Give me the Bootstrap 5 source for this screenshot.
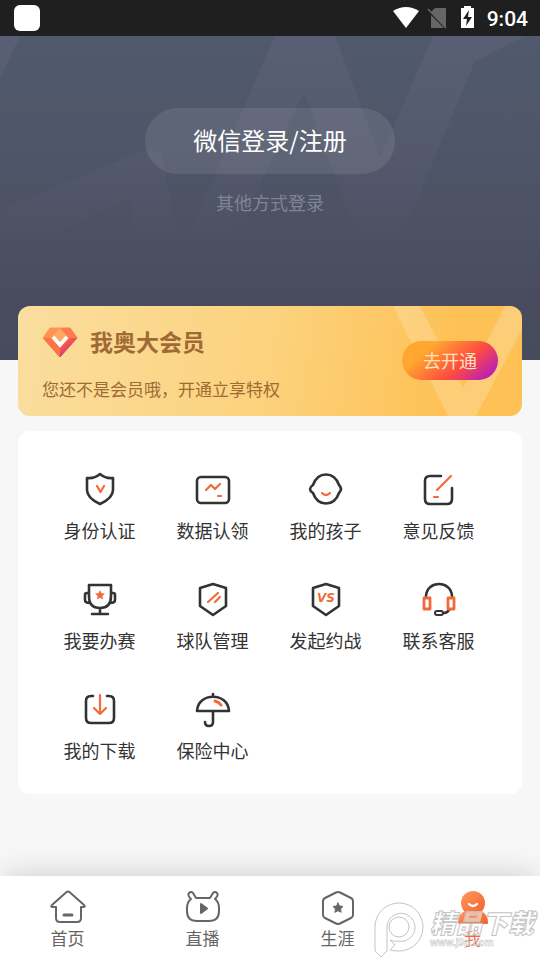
<!DOCTYPE html>
<html lang="zh-CN">
<head>
<meta charset="utf-8">
<meta name="viewport" content="width=device-width, initial-scale=1">
<title>我的</title>
<link href="https://cdn.jsdelivr.net/npm/bootstrap@5.3.0/dist/css/bootstrap.min.css" rel="stylesheet">
<style>
body{font-family:"Noto Sans CJK SC","Liberation Sans",sans-serif;background:#f7f7f7;color:#333}
svg{display:block}
.status{height:36px;background:#1f1f1f;color:#fff;padding:0 12px 0 14px}
.app-dot{width:26px;height:26px;border-radius:6px;background:#fff}
.clock{font:500 21px/24px Roboto,sans-serif;padding-top:2px}
.hero{height:324px;padding-top:72px;background:linear-gradient(#505a6c,#4f5568 38%,#484c5e 80%,#474c5c)}
.hero-art{position:absolute;inset:0;width:100%;height:324px}
.btn-wechat{--bs-btn-color:#fff;--bs-btn-bg:rgba(255,255,255,.09);--bs-btn-hover-color:#fff;--bs-btn-hover-bg:rgba(255,255,255,.15);--bs-btn-border-width:0;height:66px;padding:0 48px 2px;font-size:24px;line-height:36px}
.other{font-size:18px;line-height:24px;color:#818592;margin-top:16px}
.wrap{padding:0 18px}
.vip{margin-top:-54px;height:110px;border-radius:12px;background:linear-gradient(100deg,#fade9f,#fcd27d 50%,#fec155 85%);color:#a06a35;padding:19px 24px 0}
.vip-art{position:absolute;right:0;top:0}
.vip-title{font-size:23px;line-height:32px;font-weight:700}
.vip-note{font-size:17px;line-height:24px;margin-top:20px}
.btn-open{--bs-btn-color:#ffe3bd;--bs-btn-hover-color:#fff;--bs-btn-border-width:0;width:96px;height:39px;margin-top:16px;padding:0 0 2px;font-size:18px;line-height:36px;background:linear-gradient(140deg,#ffa72e 25%,#ff4b41 62%,#b81db8 92%)}
.panel{margin-top:15px;border-radius:12px;background:#fff;padding:38px 27px 32px 25px}
.tiles{row-gap:37px}
.tile{color:#333;font-size:18px;line-height:24px;height:73px}
.tile svg,.tab svg{fill:none;stroke:#333;stroke-width:2.6;stroke-linecap:round;stroke-linejoin:round}
.tile svg .o{stroke:#f26a3a;stroke-width:2.2}
.tile svg .of,.tile svg .vs{fill:#f26a3a;stroke:none}
.vs{font:italic 700 12px "DejaVu Sans",sans-serif}
.tabs{height:84px;background:#fff;box-shadow:0 -4px 30px -4px rgba(0,0,0,.18);padding-top:11px}
.tab{color:#666;font-size:17px;line-height:22px}
.tab svg{stroke:#666;stroke-width:2}
.tab.on{color:#f0694a}
.wm{position:absolute;right:0;bottom:0;pointer-events:none}
.wm text{fill:rgba(255,255,255,.5);stroke:#c4c4c4}
</style>
</head>
<body class="d-flex flex-column min-vh-100">
<div class="status d-flex align-items-center justify-content-between flex-shrink-0">
  <span class="app-dot"></span>
  <div class="d-flex align-items-center">
    <svg width="97" height="28" viewBox="0 0 97 28"><path d="M3 7Q16 -1 29 7L16 24Z" fill="#fff"/><path d="M45 4h11v20L41 8zM41 11v13h13z" fill="#666"/><path d="M38 5l18 19" stroke="#666" stroke-width="1.6"/><path d="M71 4h3V2h7v2h3v20H71z" fill="#fff"/><path d="M79 6l-6 9h4l-1 7 6-9h-4z" fill="#1f1f1f"/></svg>
    <span class="clock">9:04</span>
  </div>
</div>
<header class="hero position-relative flex-shrink-0 text-center">
  <svg class="hero-art" viewBox="0 0 540 324" preserveAspectRatio="none"><defs><linearGradient id="fade" x1="0" y1="0" x2="0" y2="215" gradientUnits="userSpaceOnUse"><stop stop-color="#646480" stop-opacity=".45"/><stop offset=".5" stop-color="#646480" stop-opacity=".22"/><stop offset="1" stop-color="#646480" stop-opacity="0"/></linearGradient></defs><g fill="url(#fade)"><path d="M0 0h20L0 42z"/><path d="M275 0h60l45 122L433 0h92l-50 25-70 167-43 22L304 56l-76 158h-46z"/><path d="M0 174l145-60 16 2 20 98h-42l-9-52L25 212H0z"/></g></svg>
  <div class="position-relative">
    <button type="button" class="btn btn-wechat rounded-pill">微信登录/注册</button>
    <div class="other"><a href="#" class="text-reset text-decoration-none">其他方式登录</a></div>
  </div>
</header>
<main class="wrap flex-grow-1">
  <section class="vip position-relative overflow-hidden d-flex align-items-start justify-content-between">
    <svg class="vip-art" width="130" height="110" viewBox="0 0 130 110"><path d="M1 0h27l43 82L113 0h17v23L84 110H56z" fill="#fff" fill-opacity=".2"/></svg>
    <div class="position-relative">
      <div class="d-flex align-items-center">
        <svg width="36" height="32" viewBox="0 -2 36 32" overflow="visible"><defs><linearGradient id="gem" x1="8" y1="4" x2="28" y2="30" gradientUnits="userSpaceOnUse"><stop stop-color="#ff9a4b"/><stop offset=".6" stop-color="#fa5547"/><stop offset="1" stop-color="#b32bb0"/></linearGradient></defs><path d="M8 1h20l7 10-17 19L1 11z" fill="url(#gem)" stroke="url(#gem)" stroke-linejoin="round"/><path d="M8 1h10L9 11H1z" fill="#ff9352"/><path d="M18 1l9 10-9 9-9-9z" fill="#ffa868"/><path d="M28 1l7 10h-8L18 1z" fill="#fc7d50"/><path d="M1 11h8l9 9v10z" fill="#ff7348"/><path d="M11 10l7 8 7-8" fill="none" stroke="#fff" stroke-width="3.6"/></svg>
        <span class="vip-title ms-2 ps-1">我奥大会员</span>
      </div>
      <div class="vip-note">您还不是会员哦，开通立享特权</div>
    </div>
    <button type="button" class="btn btn-open rounded-pill position-relative">去开通</button>
  </section>
  <nav class="panel" aria-label="功能">
    <div class="row row-cols-4 gx-0 text-center tiles">
      <div class="col"><a href="#" class="tile d-flex flex-column align-items-center justify-content-between text-decoration-none"><svg width="40" height="40"><path d="M20 5Q26 10 33 9V21Q33 29 20 35Q7 29 7 21V9Q14 10 20 5Z"/><path class="o" d="M17 17l3.500 6 3.500-6"/></svg><span>身份认证</span></a></div>
      <div class="col"><a href="#" class="tile d-flex flex-column align-items-center justify-content-between text-decoration-none"><svg width="40" height="40"><rect x="4" y="8" width="32" height="26" rx="4"/><path class="o" d="M13 21l5-5 4 4 5-5M25 27h3"/></svg><span>数据认领</span></a></div>
      <div class="col"><a href="#" class="tile d-flex flex-column align-items-center justify-content-between text-decoration-none"><svg width="40" height="40"><path d="M7 16C12 2 28 2 33 16Q37 20 33 24C28 38 12 38 7 24Q1 20 7 16Z"/><path class="o" d="M16 24q4 4 8 0"/></svg><span>我的孩子</span></a></div>
      <div class="col"><a href="#" class="tile d-flex flex-column align-items-center justify-content-between text-decoration-none"><svg width="40" height="40"><path d="M22 7H11q-5 0-5 5v18q0 5 5 5h17q5 0 5-5V19"/><path class="o" d="M18 21L32 7M15 28h4"/></svg><span>意见反馈</span></a></div>
      <div class="col"><a href="#" class="tile d-flex flex-column align-items-center justify-content-between text-decoration-none"><svg width="40" height="40"><path d="M9 6H31V17Q31 29 20 29Q9 29 9 17ZM9 14H7q-2 0-2 2v5q0 3 5 3M31 14h2q2 0 2 2v5q0 3-5 3M20 29v6M12 35h16"/><path class="of" d="M20 11l1.500 3.200 3.500.4-2.600 2.400.7 3.500-3.100-1.700-3.100 1.700.7-3.500-2.600-2.400 3.500-.4z"/></svg><span>我要办赛</span></a></div>
      <div class="col"><a href="#" class="tile d-flex flex-column align-items-center justify-content-between text-decoration-none"><svg width="40" height="40"><path d="M20 5L33 9V27L20 36L7 27V9Z"/><path class="o" d="M15 23L25 14M22 23l5-5"/></svg><span>球队管理</span></a></div>
      <div class="col"><a href="#" class="tile d-flex flex-column align-items-center justify-content-between text-decoration-none"><svg width="40" height="40"><path d="M20 5L33 9V27L20 36L7 27V9Z"/><text class="vs" x="11" y="23">VS</text></svg><span>发起约战</span></a></div>
      <div class="col"><a href="#" class="tile d-flex flex-column align-items-center justify-content-between text-decoration-none"><svg width="40" height="40"><path d="M7 17C8 1 32 1 33 17M30 31q-2 3-5 3"/><rect x="16" y="32" width="8" height="4" rx="2" stroke-width="2"/><path class="o" style="stroke-width:2.8" d="M5 19h6v11H5zM29 19h6v11h-6z"/></svg><span>联系客服</span></a></div>
      <div class="col"><a href="#" class="tile d-flex flex-column align-items-center justify-content-between text-decoration-none"><svg width="40" height="40"><path d="M13 7h-2q-5 0-5 5v17q0 5 5 5h18q5 0 5-5V12q0-5-5-5h-2"/><path class="o" d="M20 6v19M14 19l6 6 6-6"/></svg><span>我的下载</span></a></div>
      <div class="col"><a href="#" class="tile d-flex flex-column align-items-center justify-content-between text-decoration-none"><svg width="40" height="40"><path d="M4 22C5 3 35 3 36 22ZM20 7V5M20 22v11q0 4-4 4t-4-4"/><path class="o" style="stroke-width:3" d="M22 12q4 1 6 4"/></svg><span>保险中心</span></a></div>
    </div>
  </nav>
</main>
<footer class="tabs position-relative flex-shrink-0">
  <nav class="row row-cols-4 gx-0" aria-label="主导航">
    <a href="#" class="col tab d-flex flex-column align-items-center text-decoration-none"><svg width="40" height="40"><path d="M18 5.500q2-2 4 0L36 18q2 2-1 2h-2v11q0 4-4 4H12q-4 0-4-4V20H5q-3 0-1-2Z"/><path d="M16 28h8" stroke-width="3"/></svg>首页</a>
    <a href="#" class="col tab d-flex flex-column align-items-center text-decoration-none"><svg width="40" height="40"><path d="M13 11h14l3-5q2-2 4 0t-2 6q4 3 4 9v3q0 10-10 10H14Q4 34 4 24v-3q0-6 4-9-4-4-2-6t4 0z"/><path d="M18 17v9l6-4.500z" fill="#666"/></svg>直播</a>
    <a href="#" class="col tab d-flex flex-column align-items-center text-decoration-none"><svg width="40" height="40"><path d="M18 5.500q2-1 4 0L33 11q2 1 2 3v14q0 2-2 3L22 36.500q-2 1-4 0L7 31q-2-1-2-3V14q0-2 2-3Z"/><path d="M20 16l1.500 3 3.500.5-2.500 2.400.6 3.400-3.100-1.600-3.100 1.600.6-3.400-2.500-2.400 3.500-.5z" fill="#666" stroke-width="1"/></svg>生涯</a>
    <a href="#" class="col tab on d-flex flex-column align-items-center text-decoration-none" aria-current="page"><svg width="40" height="40"><defs><linearGradient id="me" x2="1" y2="1"><stop stop-color="#ff9a5c"/><stop offset="1" stop-color="#f4602b"/></linearGradient></defs><g stroke="none" fill="url(#me)"><path d="M5 36q0-10 8-12h14q8 2 8 12 0 1-1 1H6q-1 0-1-1z"/><circle cx="20" cy="16" r="12"/></g><path d="M16 17q4 4 8 0" stroke="#fff" stroke-width="2.400"/></svg>我</a>
  </nav>
  <svg class="wm" width="170" height="60" viewBox="0 0 170 60" aria-hidden="true"><g fill="#fff" fill-opacity=".5" stroke="#c4c4c4" stroke-width="1"><path fill-rule="evenodd" d="M5 26a24 24 0 1 1 24 25q-6 0-9-1l5-5-5-5q4 2 8 1a14 14 0 1 0-11-14v24l-6 6-6-6z"/><circle cx="29" cy="27" r="10"/></g><text x="60" y="33" font-size="26" font-weight="900" font-style="italic" stroke-width="1">精品下载</text><text x="60" y="46" font-size="10" font-family="Liberation Sans" font-weight="700" stroke-width=".5">www.j9p.com</text></svg>
</footer>
<script src="https://cdn.jsdelivr.net/npm/bootstrap@5.3.0/dist/js/bootstrap.bundle.min.js"></script>
</body>
</html>
